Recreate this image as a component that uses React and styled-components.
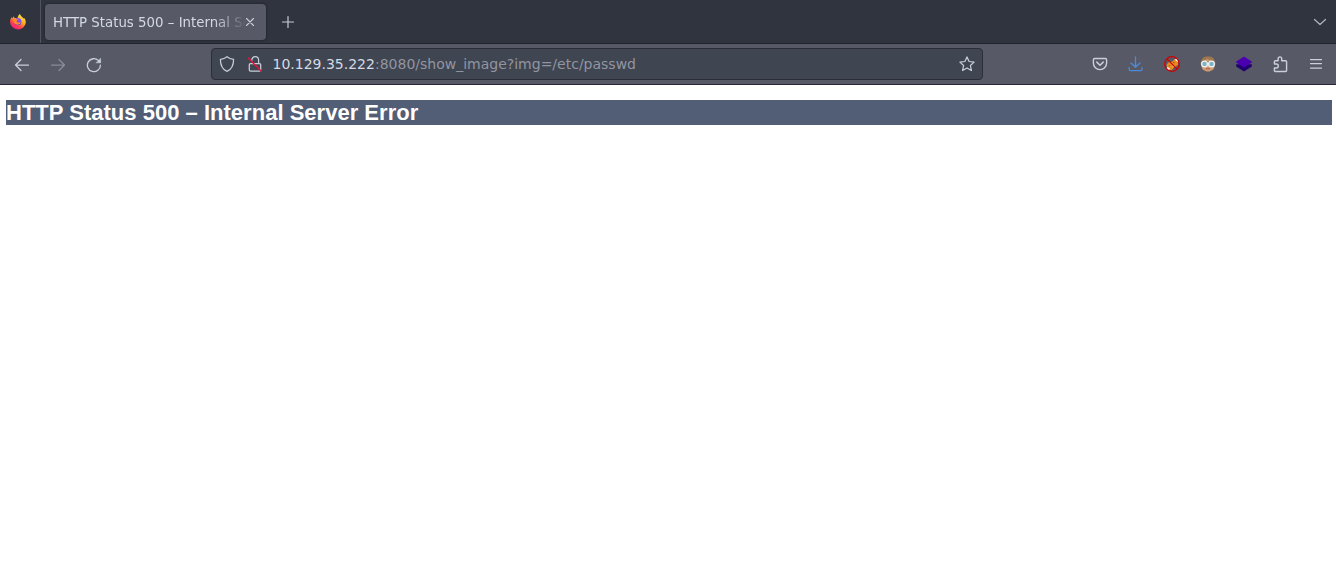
import React from "react";
import styled, { createGlobalStyle } from "styled-components";

const GlobalStyle = createGlobalStyle`
  * { box-sizing: border-box; }
  body { margin: 0; background: #fff; overflow: hidden; }
  svg { display: block; flex: none; overflow: visible; }
`;

const Browser = styled.div`
  display: flex;
  flex-direction: column;
  width: 100%;
  height: 583px;
  background: #fff;
  font-family: "DejaVu Sans", sans-serif;
`;

const TabBar = styled.div`
  display: flex;
  align-items: center;
  height: 44px;
  background: #2f343f;
  border-bottom: 1px solid #20232b;
  color: #d3dae3;
`;

const PinnedTab = styled.div`
  display: flex;
  align-items: center;
  width: 41px;
  height: 100%;
  padding-left: 10px;
  border-right: 1px solid #50525e;
`;

const Tab = styled.div`
  display: flex;
  align-items: center;
  width: 221px;
  height: 36px;
  margin: 1px 0 0 4px;
  padding: 0 12px 0 8px;
  border-radius: 4px;
  background: #585966;
  box-shadow: 0 0 3px rgba(0, 0, 0, 0.45);
`;

const TabTitle = styled.span`
  flex: 1;
  overflow: hidden;
  white-space: nowrap;
  padding-top: 1px;
  font-size: 13.33px;
  line-height: 21px;
  mask-image: linear-gradient(to left, transparent 0, black 32px);
`;

const NewTab = styled.div`
  display: flex;
  margin: 1px 0 0 15.5px;
`;

const TabList = styled.div`
  display: flex;
  margin-left: auto;
  padding-right: 10px;
  opacity: 0.85;
`;

const Toolbar = styled.div`
  display: flex;
  align-items: center;
  height: 41px;
  background: #585966;
  border-bottom: 1px solid #2b2638;
  color: #d3dae3;
`;

const IconRow = styled.div`
  display: flex;
  align-items: center;
  gap: 20px;
  padding: ${(p) => p.$pad};
  margin-left: ${(p) => (p.$end ? "auto" : 0)};
`;

const UrlBar = styled.div`
  display: flex;
  align-items: center;
  width: 772px;
  height: 32px;
  margin-left: 109px;
  padding: 0 7px;
  border: 1px solid #2b2e39;
  border-radius: 4px;
  background: #404552;
`;

const Identity = styled.div`
  display: flex;
  gap: 12px;
  width: 53.5px;
`;

const Url = styled.span`
  flex: 1;
  white-space: nowrap;
  font-size: 14px;
  line-height: 20px;
  color: #9195a0;
`;

const Host = styled.span`
  color: #d3dae3;
`;

const Page = styled.main`
  flex: 1;
  padding: 15px 4px 0 6px;
`;

const Heading = styled.h1`
  height: 25px;
  margin: 0;
  background: #525d76;
  color: #fff;
  font: bold 22px/25px "Liberation Sans", Arial, sans-serif;
  letter-spacing: 0.015px;
`;

function Icon({ size = 16, width = 1.25, color = "currentColor", opacity = 0.92, children }) {
  return (
    <svg width={size} height={size} viewBox={`0 0 ${size} ${size}`} fill="none" stroke={color}
      strokeWidth={width} strokeLinecap="round" strokeLinejoin="round" opacity={opacity}>
      {children}
    </svg>
  );
}

const Firefox = () => (
  <svg width="16" height="16" viewBox="0 0 16 16">
    <defs>
      <linearGradient id="flame" x1="0.85" y1="0" x2="0.2" y2="1">
        <stop offset="0" stopColor="#fff44f" />
        <stop offset="0.4" stopColor="#ffae1f" />
        <stop offset="0.7" stopColor="#ff4050" />
        <stop offset="1" stopColor="#e6158b" />
      </linearGradient>
      <linearGradient id="globe" x1="0.7" y1="0" x2="0.3" y2="1">
        <stop offset="0" stopColor="#9059ff" />
        <stop offset="1" stopColor="#5838d6" />
      </linearGradient>
    </defs>
    <path d="M10 .1c.2 1.300 1 2 2.100 2.800.9.6 1.400 1.200 1.700 1.900l.1-1c1.300 1.400 2 3.200 1.900 5A7.900 7.900 0 0 1 .1 8.200c0-2.300.7-4.200 1.800-5.200l.3 1.500 1.500-2.300c.1.9.5 1.500 1.200 1.900 1.200-.2 2 .1 2.700.5C7.500 3 8.500 1 10 .1z" fill="url(#flame)" />
    <circle cx="7.900" cy="7.700" r="3.600" fill="url(#globe)" />
    <path d="M3.300 4.700c1.500-.6 2.500-.2 3.200.6l2 .2c-.2.800-1.700 1-1.800 1.600-.2 1.100 1.200 1.800 2.500 1.200 1-.4 1.800.2 1.400.8-1.100 1.800-3.700 2.200-5.300.9C3.800 8.800 3.200 6.700 3.300 4.700z" fill="#ff8a22" />
  </svg>
);

const NoFox = () => (
  <svg width="16" height="16" viewBox="0 0 16 16">
    <path d="M3 12 2.600 8.500 5 6l3-.3L11 3l2.500-.5.5 6-2.500 2.500-2 .5-1.500 2.500-4-.2z" fill="#e88b20" />
    <path d="m10.500 3.500 3.200-.8.3 3.500zM3 11l3 1.200L5 14H3.500zM8.500 9.500l1.500.6-1 1.500z" fill="#f7f3ee" />
    <path d="m9 5.500 2 1-1.500 1zM4.500 9l2 .5-1 1z" fill="#9f5718" />
    <circle cx="8" cy="8" r="7.300" fill="none" stroke="#d10000" strokeWidth="1.300" />
    <path d="m2.900 2.900 10.200 10.200" stroke="#d10000" strokeWidth="1.300" />
  </svg>
);

const Goggles = () => (
  <svg width="16" height="16" viewBox="0 0 16 16">
    <path d="M1.500 6.500C1.500 3 4 .9 8 .9s6.500 2.100 6.500 5.600V10c0 3.200-2.900 5.500-6.500 5.500S1.500 13.200 1.500 10z" fill="#cf9a72" />
    <path d="M1.300 6.500C1.300 2.600 3.700.6 8 .6s6.700 2 6.700 5.900L11 4.500 7 3 5 4.500z" fill="#a0784f" />
    <path d="M0 5.500h16v3H0z" fill="#6a665f" />
    <circle cx="4.500" cy="8" r="2.900" fill="#7fb2c4" stroke="#f0f3f3" strokeWidth="1.300" />
    <circle cx="11.500" cy="8" r="2.900" fill="#7fb2c4" stroke="#f0f3f3" strokeWidth="1.300" />
    <path d="M6 13q2-.7 4 0" stroke="#ad6248" fill="none" />
  </svg>
);

const Layers = () => (
  <svg width="16" height="16" viewBox="0 0 16 16">
    <path d="M.2 8.200h15.600v2.200L8 15.500.2 10.400z" fill="#21006f" />
    <path d="m8 .5 7.800 5.100v.9L8 11.600.2 6.500v-.9z" fill="#4b00b0" />
  </svg>
);

export default function App() {
  return (
    <Browser>
      <GlobalStyle />
      <TabBar>
        <PinnedTab><Firefox /></PinnedTab>
        <Tab>
          <TabTitle>HTTP Status 500 – Internal Server Error</TabTitle>
          <Icon size={8} width={1.1}><path d="m.5.5 7 7m0-7-7 7" /></Icon>
        </Tab>
        <NewTab><Icon size={12} width={1.2}><path d="M6 .5v11M.5 6h11" /></Icon></NewTab>
        <TabList><Icon size={12} width={1.2}><path d="m.5 3.500 5.500 5 5.500-5" /></Icon></TabList>
      </TabBar>
      <Toolbar>
        <IconRow $pad="1px 0 0 14px">
          <Icon><path d="M1.500 8h13M7 2.500 1.500 8 7 13.500" /></Icon>
          <Icon opacity={0.4}><path d="M1.500 8h13M9 2.500 14.500 8 9 13.500" /></Icon>
          <Icon width={1.3}>
            <path d="M14.400 8.200A6.500 6.500 0 1 1 12.500 3.600L14 5" />
            <path d="M14.600 1.500v4.300h-4.300z" fill="currentColor" strokeWidth=".5" />
          </Icon>
        </IconRow>
        <UrlBar>
          <Identity>
            <Icon><path d="M8 .7Q10.500 2.900 14.600 3.300C14.600 9.200 12.700 13.500 8 15.400 3.300 13.500 1.400 9.200 1.400 3.300Q5.500 2.900 8 .7Z" /></Icon>
            <Icon>
              <path d="M4.800 4.300c0-2 1.300-3.600 3.400-3.600s3.400 1.600 3.400 3.600v3.200M3.500 7.500h9q1.200 0 1.200 1.200v5.100q0 1.300-1.300 1.300h-8.800q-1.300 0-1.300-1.300V8.700q0-1.200 1.200-1.200z" />
              <path d="m1.300 2 13 13.300" stroke="#f0103c" strokeWidth="1.400" />
            </Icon>
          </Identity>
          <Url><Host>10.129.35.222</Host>:8080/show_image?img=/etc/passwd</Url>
          <Icon><path d="m8 .9 2.100 4.600 5 .6-3.700 3.400 1 5L8 12l-4.400 2.500 1-5L.9 6.100l5-.6z" /></Icon>
        </UrlBar>
        <IconRow $end $pad="0 12px 0 0">
          <Icon width={1.4}>
            <path d="M2.600 2.500h10.800q1.200 0 1.200 1.300V7a6.600 6.600 0 0 1-13.200 0V3.800q0-1.300 1.200-1.300z" />
            <path d="m4.800 6.100 3.200 3.100 3.200-3.100" strokeWidth="1.500" />
          </Icon>
          <Icon color="#4a90e2" width={1.3}><path d="M7.500 1v10M3 7l4.500 4.300L12 7M1.200 11.700v1.500q0 1.500 1.500 1.500h9.800q1.500 0 1.500-1.500v-1.500" /></Icon>
          <NoFox />
          <Goggles />
          <Layers />
          <Icon width={1.4}><path d="M2.400 8V5.800q0-1 1-1h2.700V2.700a1.800 1.800 0 0 1 3.600 0v2.100h3.900q1 0 1 1v8.700q0 1-1 1H3.400q-1 0-1-1V12h1.900a2 2 0 0 0 0-4z" /></Icon>
          <Icon><path d="M2.500 3.500h11M2.500 7.500h11M2.500 12h11" /></Icon>
        </IconRow>
      </Toolbar>
      <Page><Heading>HTTP Status 500 – Internal Server Error</Heading></Page>
    </Browser>
  );
}
